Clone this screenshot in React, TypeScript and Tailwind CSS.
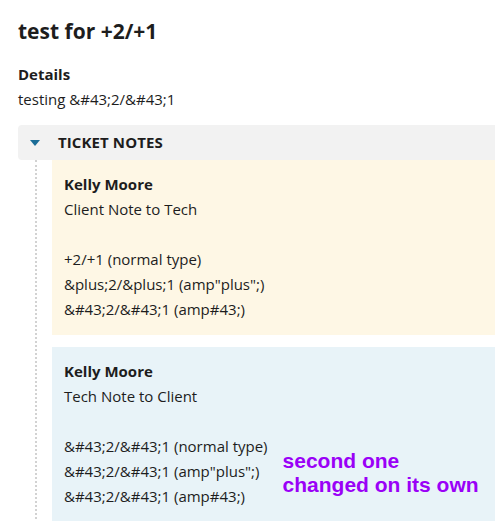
export default function App() {
  const font = { fontFamily: '"Open Sans", "Noto Sans", sans-serif' };
  return (
    <div className="w-[495px] h-[521px] overflow-hidden bg-white text-[#1d1d1d]" style={font}>
      <div className="pl-[18px] pt-[16px]">
        <h1 className="text-[21px] leading-[30px] font-bold">test for +2/+1</h1>
        <div className="mt-[16px] text-[15px] leading-[25px]">
          <div className="font-bold">Details</div>
          <div>testing &amp;#43;2/&amp;#43;1</div>
        </div>

        <div className="mt-[13px]">
          <div className="h-[35px] bg-[#f2f2f2] rounded-l-[4px] flex items-center">
            <svg className="ml-[12px]" width="10" height="6" viewBox="0 0 10 6">
              <path d="M0 0 H10 L5 6 Z" fill="#1b6d97" />
            </svg>
            <span className="ml-[18px] text-[15px] font-bold tracking-[0.1px]">TICKET NOTES</span>
          </div>

          <div className="flex">
            <div className="w-[34px] flex justify-center">
              <div className="w-[2px] h-full border-l-2 border-dotted border-[#d2d2d2] ml-[1px]" />
            </div>
            <div className="flex-1 flex flex-col gap-[12px] text-[15px] leading-[25px]">
              <div className="bg-[#fef7e5] px-[12px] pt-[12px] pb-[13px]">
                <div className="font-bold">Kelly Moore</div>
                <div>Client Note to Tech</div>
                <div className="h-[25px]" />
                <div>+2/+1 (normal type)</div>
                <div>&amp;plus;2/&amp;plus;1 (amp"plus";)</div>
                <div>&amp;#43;2/&amp;#43;1 (amp#43;)</div>
              </div>
              <div className="bg-[#e8f3f8] px-[12px] pt-[12px] pb-[30px] flex">
                <div>
                  <div className="font-bold">Kelly Moore</div>
                  <div>Tech Note to Client</div>
                  <div className="h-[25px]" />
                  <div>&amp;#43;2/&amp;#43;1 (normal type)</div>
                  <div>&amp;#43;2/&amp;#43;1 (amp"plus";)</div>
                  <div>&amp;#43;2/&amp;#43;1 (amp#43;)</div>
                </div>
                <div
                  className="ml-[15px] mt-[90px] text-[21px] leading-[24px] font-bold text-[#9a00f7] whitespace-nowrap"
                  style={{ fontFamily: '"Liberation Sans", Arial, sans-serif' }}
                >
                  second one
                  <br />
                  changed on its own
                </div>
              </div>
            </div>
          </div>
        </div>
      </div>
    </div>
  );
}
